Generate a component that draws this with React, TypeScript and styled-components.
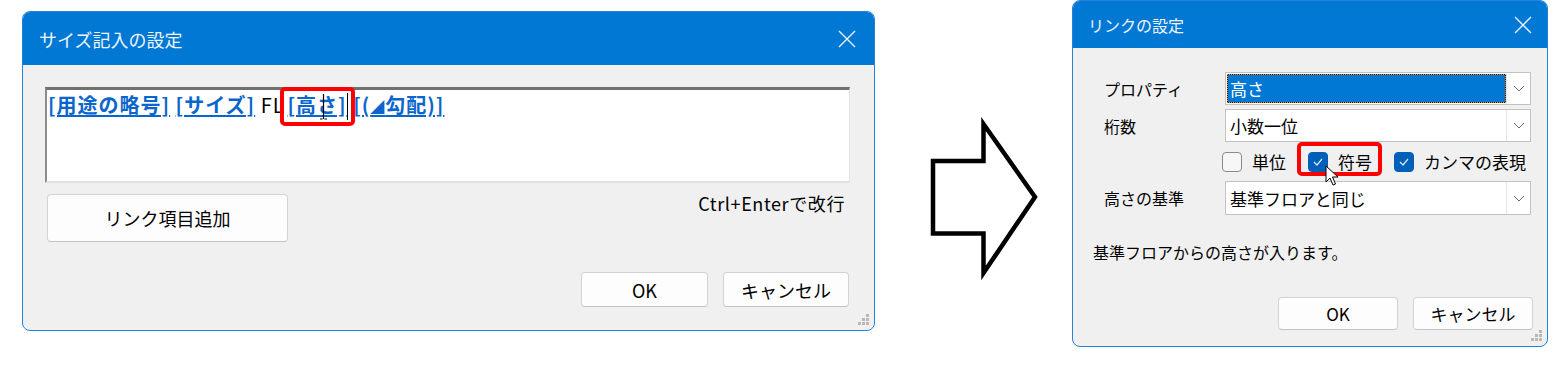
import React from "react";
import styled, { createGlobalStyle, css } from "styled-components";

const GlobalStyle = createGlobalStyle`
  html, body { margin: 0; padding: 0; background: #ffffff; }
  body { font-family: "Noto Sans CJK JP", "Noto Sans", sans-serif; color: #000; }
  * { box-sizing: border-box; }
`;

const Page = styled.div`
  width: 1566px;
  height: 368px;
  display: flex;
  align-items: flex-start;
  padding-left: 22px;
  overflow: hidden;
`;

const Dialog = styled.div<{ $w: number; $h: number; $mt: number; $ml: number }>`
  position: relative;
  flex: none;
  margin-top: ${(p) => p.$mt}px;
  margin-left: ${(p) => p.$ml}px;
  width: ${(p) => p.$w}px;
  height: ${(p) => p.$h}px;
  border: 1px solid #2383d8;
  border-radius: 8px;
  background: #f0f0f0;
  overflow: hidden;
  display: flex;
  flex-direction: column;
`;

const TitleBar = styled.div<{ $h: number; $fs: number; $pl: number; $pr: number }>`
  flex: none;
  height: ${(p) => p.$h}px;
  background: #0078d4;
  display: flex;
  align-items: center;
  justify-content: space-between;
  padding: 0 ${(p) => p.$pr}px 0 ${(p) => p.$pl}px;
  color: #eef5fc;
  font-size: ${(p) => p.$fs}px;
  line-height: 1;
`;

const CloseIcon = styled.svg`
  width: 18px;
  height: 18px;
  flex: none;
`;

const LeftBody = styled.div`
  flex: 1;
  display: flex;
  flex-direction: column;
  padding: 22px 24px 0 22px;
`;

const EditArea = styled.div`
  position: relative;
  height: 96px;
  background: #ffffff;
  border-top: 3px solid #707070;
  border-left: 2px solid #8c8c8c;
  border-right: 1px solid #e2e2e2;
  border-bottom: 2px solid #e2e2e2;
  padding: 2px 2px 0 1px;
  font-size: 20px;
  line-height: 26px;
  letter-spacing: 1px;
  white-space: nowrap;
`;

const LinkToken = styled.span<{ $marked?: boolean }>`
  position: relative;
  color: #0a66cc;
  font-weight: 700;
  text-decoration: underline;
  text-underline-offset: 2px;
  ${(p) =>
    p.$marked &&
    css`
      &::after {
        content: "";
        position: absolute;
        left: -8px;
        right: -8px;
        top: -3px;
        bottom: -7px;
        border: 4px solid #ff0000;
        border-radius: 5px;
      }
    `}
`;

const PlainToken = styled.span`
  color: #000;
  font-weight: 400;
  margin-right: 3px;
`;

const Slope = styled.span`
  font-size: 14px;
  vertical-align: 1px;
`;

const Caret = styled.span`
  display: inline-block;
  width: 1px;
  height: 27px;
  margin-left: 0;
  vertical-align: -7px;
  background: #000;
`;

const IBeam = styled.svg`
  position: absolute;
  left: 272px;
  top: 3px;
  width: 9px;
  height: 27px;
`;

const ActionRow = styled.div`
  margin-top: 11px;
  display: flex;
  justify-content: space-between;
  align-items: flex-start;
`;

const Button = styled.button<{ $w: number; $h: number; $fs: number }>`
  width: ${(p) => p.$w}px;
  height: ${(p) => p.$h}px;
  background: #fdfdfd;
  border: 1px solid #d3d3d3;
  border-bottom-color: #c2c2c2;
  border-radius: 4px;
  font-family: inherit;
  font-size: ${(p) => p.$fs}px;
  color: #000;
  padding: 0;
  line-height: 1;
`;

const AddButton = styled(Button)`
  margin-left: 2px;
`;

const Hint = styled.span`
  margin-right: 5px;
  font-size: 18px;
  line-height: 18px;
  letter-spacing: 0.6px;
`;

const ButtonRow = styled.div<{ $mt: number; $gap: number; $pr: number }>`
  margin-top: ${(p) => p.$mt}px;
  display: flex;
  justify-content: flex-end;
  gap: ${(p) => p.$gap}px;
  padding-right: ${(p) => p.$pr}px;
`;

const Grip = styled.svg`
  position: absolute;
  right: 4px;
  bottom: 4px;
  width: 12px;
  height: 12px;
`;

const ArrowGraphic = styled.svg`
  flex: none;
  margin-left: 45px;
  margin-top: 110px;
  width: 130px;
  height: 180px;
`;

const RightBody = styled.div`
  flex: 1;
  display: flex;
  flex-direction: column;
  padding: 24px 14px 0 20px;
`;

const Form = styled.div`
  display: grid;
  grid-template-columns: 121px 306px;
  grid-template-rows: 33px 33px 31px 34px;
  row-gap: 4px;
  padding-left: 11px;
  align-items: center;
`;

const FieldLabel = styled.span`
  font-size: 16px;
  line-height: 20px;
`;

const Combo = styled.div<{ $selected?: boolean }>`
  height: 100%;
  display: flex;
  background: #ffffff;
  border: 1px solid #c2c2c2;
  padding: ${(p) => (p.$selected ? "1px 0 1px 1px" : "0")};
`;

const ComboValue = styled.div<{ $selected?: boolean }>`
  flex: 1;
  display: flex;
  align-items: center;
  padding-left: ${(p) => (p.$selected ? 2 : 4)}px;
  font-size: 17px;
  color: ${(p) => (p.$selected ? "#ffffff" : "#000000")};
  ${(p) =>
    p.$selected &&
    css`
      border: 1px dotted #ef8c2c;
      background: linear-gradient(#0078d4, #0078d4) padding-box, #1c1c1c border-box;
    `}
`;

const ComboButton = styled.div`
  width: 24px;
  flex: none;
  display: flex;
  align-items: center;
  justify-content: center;
  border-left: 1px solid #e4e4e4;
  background: #ffffff;
`;

const CheckRow = styled.div`
  grid-column: 2;
  margin-left: -3px;
  display: flex;
  align-items: center;
  gap: 22px;
`;

const CheckItem = styled.label<{ $marked?: boolean }>`
  position: relative;
  display: flex;
  align-items: center;
  gap: 10px;
  font-size: 17px;
  line-height: 20px;
  ${(p) =>
    p.$marked &&
    css`
      &::after {
        content: "";
        position: absolute;
        left: -11px;
        right: -10px;
        top: -10px;
        bottom: -4px;
        border: 4px solid #ff0000;
        border-radius: 5px;
      }
    `}
`;

const Box = styled.span<{ $checked?: boolean }>`
  width: 20px;
  height: 20px;
  flex: none;
  border-radius: 4px;
  display: flex;
  align-items: center;
  justify-content: center;
  ${(p) =>
    p.$checked
      ? css`
          background: #005fb8;
          border: 1px solid #005fb8;
        `
      : css`
          background: #f7f7f7;
          border: 1px solid #8a8a8a;
        `}
`;

const Pointer = styled.svg`
  position: absolute;
  left: 17px;
  top: 13px;
  width: 14px;
  height: 22px;
  z-index: 2;
`;

const Description = styled.div`
  margin-top: 25px;
  font-size: 16px;
  line-height: 24px;
`;

const Close = () => (
  <CloseIcon viewBox="0 0 18 18">
    <path d="M1 1 L17 17 M17 1 L1 17" stroke="#eef5fc" strokeWidth="1.4" fill="none" />
  </CloseIcon>
);

const ResizeGrip = () => (
  <Grip viewBox="0 0 12 12">
    {[
      [8, 0],
      [4, 4],
      [8, 4],
      [0, 8],
      [4, 8],
      [8, 8],
    ].map(([x, y]) => (
      <rect key={`${x}-${y}`} x={x} y={y} width="3" height="3" fill="#b9b9b9" />
    ))}
  </Grip>
);

const Chevron = () => (
  <svg width="12" height="7" viewBox="0 0 12 7">
    <polyline points="1,1 6,6 11,1" fill="none" stroke="#6e6e6e" strokeWidth="1" />
  </svg>
);

const Check = () => (
  <svg width="12" height="10" viewBox="0 0 12 10">
    <polyline points="2,5 5,8 10,2" fill="none" stroke="#d8e8f8" strokeWidth="1.3" />
  </svg>
);

const Checkbox: React.FC<{ checked?: boolean; label: string; marked?: boolean; children?: React.ReactNode }> = ({
  checked,
  label,
  marked,
  children,
}) => (
  <CheckItem $marked={marked}>
    <Box $checked={checked}>{checked && <Check />}</Box>
    <span>{label}</span>
    {children}
  </CheckItem>
);

const ComboField: React.FC<{ value: string; selected?: boolean }> = ({ value, selected }) => (
  <Combo $selected={selected}>
    <ComboValue $selected={selected}>{value}</ComboValue>
    <ComboButton>
      <Chevron />
    </ComboButton>
  </Combo>
);

export default function App() {
  return (
    <>
      <GlobalStyle />
      <Page>
        <Dialog $w={853} $h={320} $mt={11} $ml={0}>
          <TitleBar $h={53} $fs={18} $pl={16} $pr={18}>
            <span>サイズ記入の設定</span>
            <Close />
          </TitleBar>
          <LeftBody>
            <EditArea>
              <LinkToken>[用途の略号]</LinkToken> <LinkToken>[サイズ]</LinkToken>{" "}
              <PlainToken>FL</PlainToken>
              <LinkToken $marked>[高さ]</LinkToken>
              <Caret /> <LinkToken>
                [(<Slope>◢</Slope>勾配)]
              </LinkToken>
              <IBeam viewBox="0 0 9 27">
                <path d="M4.5 1 V26 M1 26 H3.5 M5.5 26 H8" stroke="#000" strokeWidth="1.2" fill="none" />
              </IBeam>
            </EditArea>
            <ActionRow>
              <AddButton $w={241} $h={48} $fs={18}>
                リンク項目追加
              </AddButton>
              <Hint>Ctrl+Enterで改行</Hint>
            </ActionRow>
            <ButtonRow $mt={30} $gap={15} $pr={1}>
              <Button $w={127} $h={35} $fs={18}>
                OK
              </Button>
              <Button $w={126} $h={35} $fs={18}>
                キャンセル
              </Button>
            </ButtonRow>
          </LeftBody>
          <ResizeGrip />
        </Dialog>

        <ArrowGraphic viewBox="0 0 130 180">
          <polygon
            points="13,51 63.5,51 63.5,14 115,87 63.5,163 63.5,123.5 13,123.5"
            fill="#ffffff"
            stroke="#000000"
            strokeWidth="4.5"
            strokeLinejoin="miter"
          />
        </ArrowGraphic>

        <Dialog $w={476} $h={347} $mt={0} $ml={22}>
          <TitleBar $h={47} $fs={16} $pl={15} $pr={15}>
            <span>リンクの設定</span>
            <Close />
          </TitleBar>
          <RightBody>
            <Form>
              <FieldLabel>プロパティ</FieldLabel>
              <ComboField value="高さ" selected />
              <FieldLabel>桁数</FieldLabel>
              <ComboField value="小数一位" />
              <CheckRow>
                <Checkbox label="単位" />
                <Checkbox label="符号" checked marked>
                  <Pointer viewBox="0 0 14 22">
                    <path
                      d="M1 1 L1 17 L5 13 L8 20 L10.5 19 L7.5 12 L13 12 Z"
                      fill="#ffffff"
                      stroke="#000000"
                      strokeWidth="1"
                      strokeLinejoin="round"
                    />
                  </Pointer>
                </Checkbox>
                <Checkbox label="カンマの表現" checked />
              </CheckRow>
              <FieldLabel>高さの基準</FieldLabel>
              <ComboField value="基準フロアと同じ" />
            </Form>
            <Description>基準フロアからの高さが入ります。</Description>
            <ButtonRow $mt={33} $gap={15} $pr={0}>
              <Button $w={120} $h={33} $fs={17}>
                OK
              </Button>
              <Button $w={120} $h={33} $fs={17}>
                キャンセル
              </Button>
            </ButtonRow>
          </RightBody>
          <ResizeGrip />
        </Dialog>
      </Page>
    </>
  );
}
